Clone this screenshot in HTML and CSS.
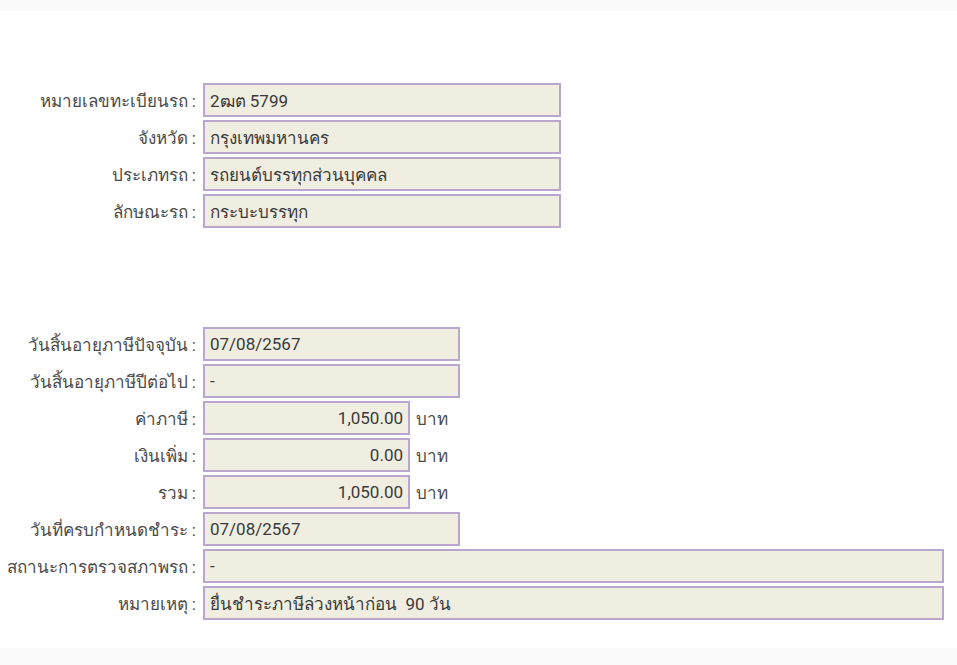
FILE: index.html
```html
<!DOCTYPE html>
<html lang="th">
<head>
    <meta charset="UTF-8">
    <title>ข้อมูลรถ</title>
    <link rel="stylesheet" href="styles.css">
</head>
<body>
<div id="top-bar"></div>
<div id="content">
    <div class="group">
        <div class="row"><span class="label">หมายเลขทะเบียนรถ :</span><div class="field mid">2ฒต 5799</div></div>
        <div class="row"><span class="label">จังหวัด :</span><div class="field mid">กรุงเทพมหานคร</div></div>
        <div class="row"><span class="label">ประเภทรถ :</span><div class="field mid">รถยนต์บรรทุกส่วนบุคคล</div></div>
        <div class="row"><span class="label">ลักษณะรถ :</span><div class="field mid">กระบะบรรทุก</div></div>
    </div>
    <div class="group second">
        <div class="row"><span class="label">วันสิ้นอายุภาษีปัจจุบัน :</span><div class="field short">07/08/2567</div></div>
        <div class="row"><span class="label">วันสิ้นอายุภาษีปีต่อไป :</span><div class="field short">-</div></div>
        <div class="row"><span class="label">ค่าภาษี :</span><div class="field money">1,050.00</div><span class="unit">บาท</span></div>
        <div class="row"><span class="label">เงินเพิ่ม :</span><div class="field money">0.00</div><span class="unit">บาท</span></div>
        <div class="row"><span class="label">รวม :</span><div class="field money">1,050.00</div><span class="unit">บาท</span></div>
        <div class="row"><span class="label">วันที่ครบกำหนดชำระ :</span><div class="field short">07/08/2567</div></div>
        <div class="row"><span class="label">สถานะการตรวจสภาพรถ :</span><div class="field wide">-</div></div>
        <div class="row"><span class="label">หมายเหตุ :</span><div class="field wide">ยื่นชำระภาษีล่วงหน้าก่อน&nbsp; 90 วัน</div></div>
    </div>
</div>
<div id="bottom-bar"></div>
</body>
</html>
```

FILE: styles.css
```css
body {
    margin: 0;
    background: #ffffff;
    font-family: Roboto, "Noto Sans", sans-serif;
    font-size: 17px;
    color: #3a3a3a;
}
#top-bar {
    height: 11px;
    background: #fafafa;
}
#content {
    height: 637px;
    padding-top: 72px;
    box-sizing: border-box;
}
.group {
    display: flex;
    flex-direction: column;
    gap: 3px;
}
.group.second {
    margin-top: 99px;
}
.row {
    display: flex;
    align-items: center;
}
.label {
    width: 196px;
    padding-right: 7px;
    text-align: right;
    white-space: nowrap;
    color: #4a4a4a;
}
.field {
    height: 34px;
    box-sizing: border-box;
    border: 2px solid #b9a7cf;
    background: #efeee1;
    padding: 0 5px;
    display: flex;
    align-items: center;
    white-space: nowrap;
}
.mid {
    width: 358px;
}
.short {
    width: 257px;
}
.money {
    width: 207px;
    justify-content: flex-end;
}
.wide {
    width: 741px;
}
.unit {
    margin-left: 6px;
    color: #4a4a4a;
}
#bottom-bar {
    height: 17px;
    background: #fafafa;
}
```
